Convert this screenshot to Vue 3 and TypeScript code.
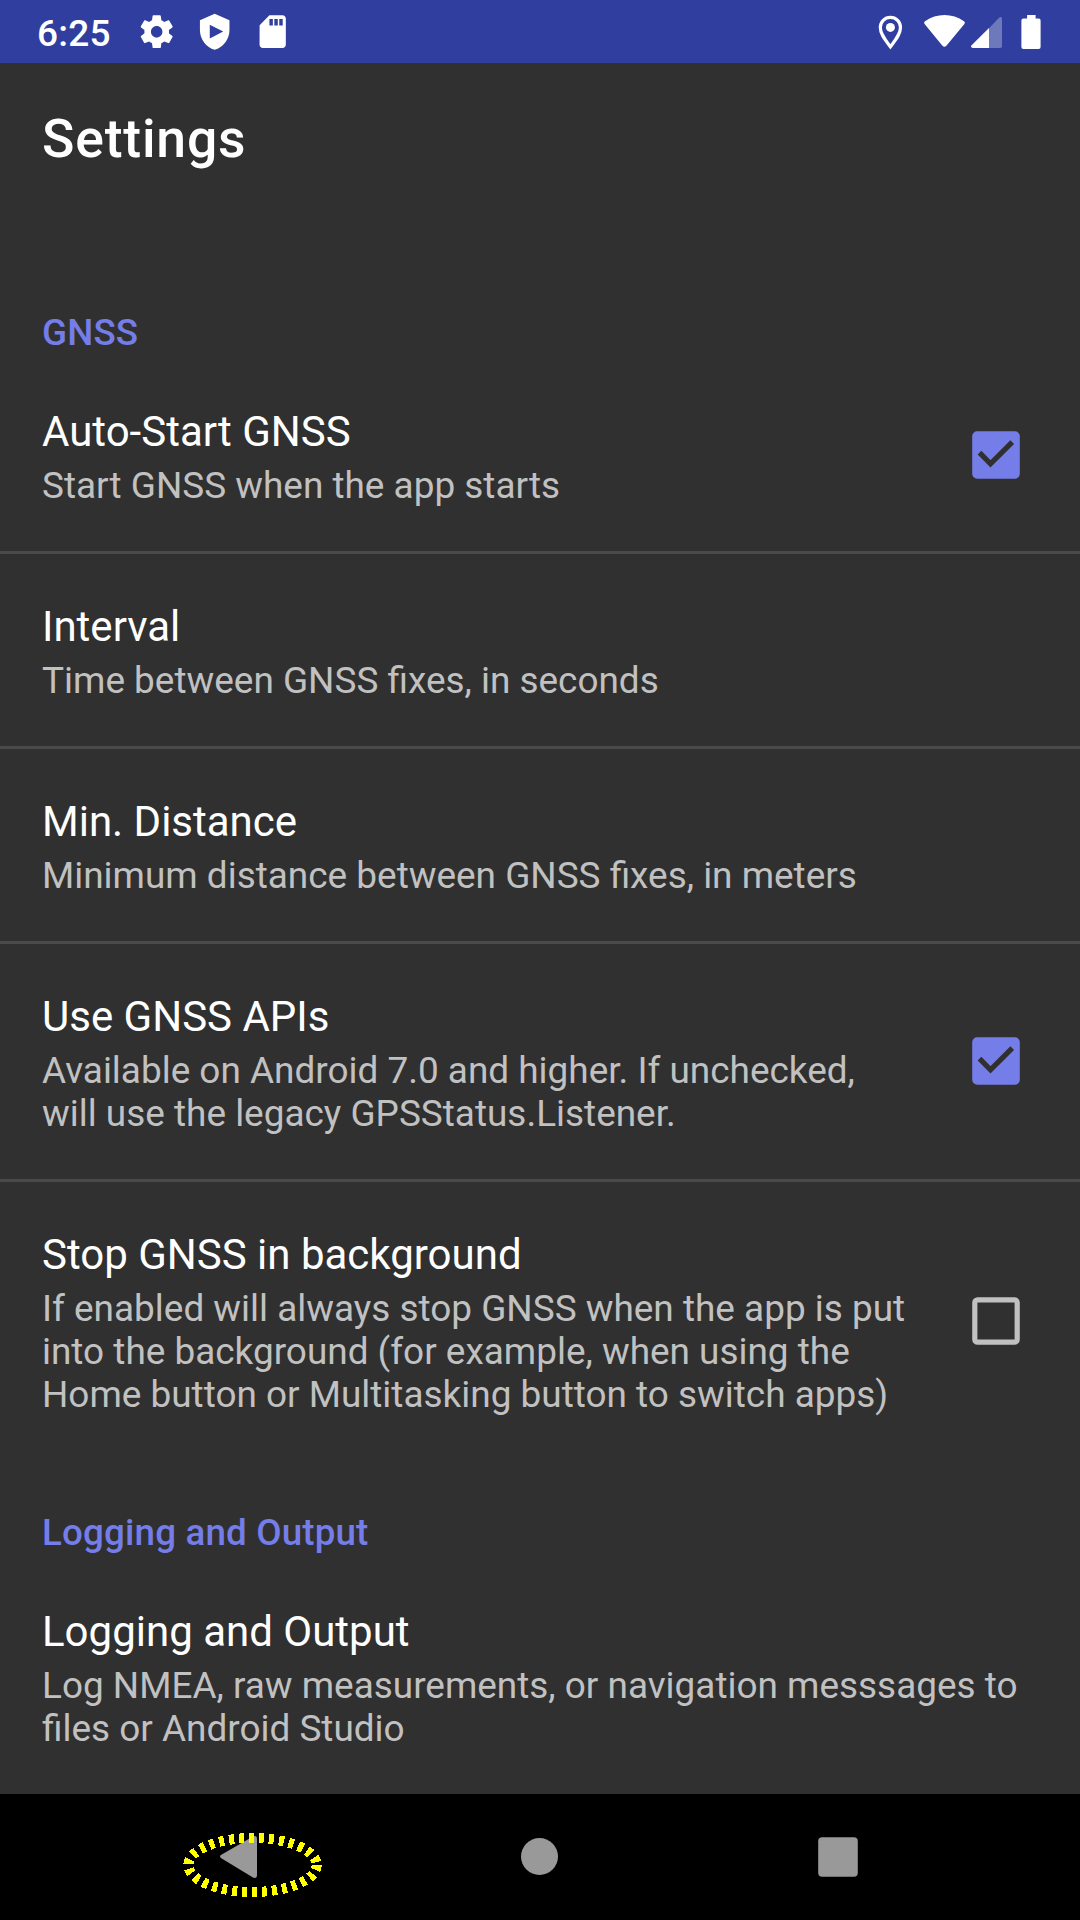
<script setup lang="ts">
interface Preference {
  title: string
  summary: string[]
  checked?: boolean
}
interface Category {
  name: string
  items: Preference[]
}

const categories: Category[] = [
  {
    name: 'GNSS',
    items: [
      { title: 'Auto-Start GNSS', summary: ['Start GNSS when the app starts'], checked: true },
      { title: 'Interval', summary: ['Time between GNSS fixes, in seconds'] },
      { title: 'Min. Distance', summary: ['Minimum distance between GNSS fixes, in meters'] },
      {
        title: 'Use GNSS APIs',
        summary: ['Available on Android 7.0 and higher. If unchecked,', 'will use the legacy GPSStatus.Listener.'],
        checked: true,
      },
      {
        title: 'Stop GNSS in background',
        summary: [
          'If enabled will always stop GNSS when the app is put',
          'into the background (for example, when using the',
          'Home button or Multitasking button to switch apps)',
        ],
        checked: false,
      },
    ],
  },
  {
    name: 'Logging and Output',
    items: [
      {
        title: 'Logging and Output',
        summary: ['Log NMEA, raw measurements, or navigation messsages to', 'files or Android Studio'],
      },
    ],
  },
]
</script>

<template>
  <div class="screen">
    <header class="status">
      <span class="time">6:25</span>
      <div class="notifications">
        <svg width="39.4" height="39.4" viewBox="0 0 24 24" fill="#fff">
          <path d="M19.43 12.98c.04-.32.07-.64.07-.98s-.03-.66-.07-.98l2.11-1.65c.19-.15.24-.42.12-.64l-2-3.46c-.12-.22-.39-.3-.61-.22l-2.49 1c-.52-.4-1.08-.73-1.69-.98l-.38-2.65C14.46 2.18 14.25 2 14 2h-4c-.25 0-.46.18-.49.42l-.38 2.65c-.61.25-1.17.59-1.69.98l-2.49-1c-.23-.09-.49 0-.61.22l-2 3.46c-.13.22-.07.49.12.64l2.11 1.65c-.04.32-.07.65-.07.98s.03.66.07.98l-2.11 1.65c-.19.15-.24.42-.12.64l2 3.46c.12.22.39.3.61.22l2.49-1c.52.4 1.08.73 1.69.98l.38 2.65c.03.24.24.42.49.42h4c.25 0 .46-.18.49-.42l.38-2.65c.61-.25 1.17-.59 1.69-.98l2.49 1c.23.09.49 0 .61-.22l2-3.46c.12-.22.07-.49-.12-.64l-2.11-1.65zM12 15.5c-1.93 0-3.5-1.57-3.5-3.5s1.57-3.5 3.5-3.5 3.5 1.57 3.5 3.5-1.57 3.5-3.5 3.5z" />
        </svg>
        <svg width="39.4" height="39.4" viewBox="0 0 24 24" fill="#fff" fill-rule="evenodd">
          <path d="M12 1 3 5v6c0 5.55 3.84 10.74 9 12 5.160-1.260 9-6.450 9-12V5zM9 7.700l8.200 4.200L9 16.100z" />
        </svg>
        <svg width="39.4" height="39.4" viewBox="0 0 24 24" fill="#fff" fill-rule="evenodd">
          <path d="M18 2h-8L4.020 8 4 20c0 1.100.9 2 2 2h12c1.100 0 2-.9 2-2V4c0-1.100-.9-2-2-2zM10 4.200h2.100v4H10zm3 0h2.100v4H13zm3 0h2.100v4H16z" />
        </svg>
      </div>
      <div class="system">
        <svg class="pin" width="26" height="36" viewBox="877 13 26 36">
          <path d="M890.400 16.400c-5.700 0-10.100 4.500-10.100 10.200 0 6.500 4.700 12 10.100 19.200 5.400-7.200 10.100-12.700 10.100-19.200 0-5.700-4.400-10.200-10.100-10.200z" fill="none" stroke="#fff" stroke-width="3.200" />
          <circle cx="890.400" cy="26.400" r="4.500" fill="#fff" />
        </svg>
        <svg class="wifi" width="43" height="36" viewBox="923 13 43 36">
          <path d="M925 20.300C936.500 12 952.500 12 964 20.300q1.500 1.300.4 2.800L946.400 44.800q-2 1.700-4 0L924.600 23.100q-1.100-1.500.4-2.800z" fill="#fff" />
        </svg>
        <svg class="signal" width="33" height="36" viewBox="970 13 33 36">
          <path d="M989 27.200 998.800 17q3.200-2.300 3.200 1.200v27q0 1.800-1.800 1.800H989z" fill="#fff" fill-opacity=".3" />
          <path d="M989 27V47h-16.200q-2.800-.5-1.200-2.700z" fill="#fff" />
        </svg>
        <svg class="battery" width="20" height="36" viewBox="1021.500 13 20 36">
          <path d="M1027.600 14h8.500v3.500h3q2 0 2 2V46q0 2-2 2h-15.200q-2 0-2-2V19.500q0-2 2-2h3.700z" fill="#fff" />
        </svg>
      </div>
    </header>

    <h1 class="page-title">Settings</h1>

    <section v-for="category in categories" :key="category.name" class="category">
      <h2>{{ category.name }}</h2>
      <div v-for="item in category.items" :key="item.title" class="row">
        <div class="text">
          <div class="title">{{ item.title }}</div>
          <div class="summary">
            <div v-for="line in item.summary" :key="line">{{ line }}</div>
          </div>
        </div>
        <svg v-if="item.checked !== undefined" class="check" width="48" height="48" viewBox="0 0 48 48">
          <template v-if="item.checked">
            <rect x=".2" y=".2" width="47.600" height="47.600" rx="5" fill="#757de8" />
            <path d="M7.500 21.700 18.500 32.800 40.200 11.200" fill="none" stroke="#303030" stroke-width="5.200" />
          </template>
          <rect v-else x="2.800" y="2.800" width="42.400" height="42.400" rx="2.800" fill="none" stroke="#c1c1c1" stroke-width="5.200" />
        </svg>
      </div>
    </section>

    <nav class="nav">
      <svg class="back" width="38" height="44" viewBox="0 0 38 44">
        <path d="M1.300 19.800 33 1.400q4-1.400 4 2.600v36q0 4-4 2.600L1.300 23.200q-2.600-1.700 0-3.400z" fill="#999" />
      </svg>
      <svg class="home" width="38" height="38" viewBox="0 0 38 38"><circle cx="18.500" cy="18.500" r="18.500" fill="#999" /></svg>
      <svg class="recent" width="40" height="40" viewBox="0 0 40 40"><rect x=".2" y=".2" width="39.600" height="39.600" rx="4" fill="#999" /></svg>
      <svg class="highlight" width="140" height="66" viewBox="0 0 140 66">
        <ellipse cx="69.500" cy="33" rx="64.200" ry="27" fill="none" stroke="#ff0" stroke-width="10" stroke-dasharray="5 5" shape-rendering="crispEdges" />
      </svg>
    </nav>
  </div>
</template>

<style>
body {
  margin: 0;
  background: #303030;
}
</style>

<style scoped>
.screen {
  width: 1080px;
  height: 1920px;
  overflow: hidden;
  display: flex;
  flex-direction: column;
  background: #303030;
  color: #fff;
  font-family: Roboto, sans-serif;
}
svg {
  display: block;
  flex: none;
}
.status {
  height: 63px;
  flex: none;
  box-sizing: border-box;
  padding: 0 39px 0 37px;
  background: #303f9f;
  display: flex;
  align-items: center;
}
.time {
  width: 100px;
  font-size: 37px;
  letter-spacing: 0.200px;
  font-weight: 500;
  line-height: 43px;
  padding-top: 3px;
}
.notifications {
  display: flex;
  gap: 18.600px;
}
.system {
  display: flex;
  margin-left: auto;
}
.wifi {
  margin-left: 20px;
}
.signal {
  margin-left: 4px;
}
.battery {
  margin-left: 18.500px;
}
.page-title {
  flex: none;
  margin: 0;
  height: 197px;
  box-sizing: border-box;
  padding: 44px 42px 0;
  font-size: 53.500px;
  line-height: 63px;
  font-weight: 500;
  letter-spacing: 0.800px;
}
.category {
  flex: none;
}
.category h2 {
  margin: 0;
  height: 99px;
  box-sizing: border-box;
  padding: 51px 42px 0;
  font-size: 36.750px;
  line-height: 43px;
  font-weight: 500;
  letter-spacing: 0.160px;
  color: #757de8;
}
.row {
  display: flex;
  align-items: center;
  justify-content: space-between;
  padding: 0 60px 0 42px;
}
.row + .row {
  border-top: 3px solid #4a4a4a;
}
.text {
  padding: 48px 0 44px;
  white-space: nowrap;
}
.title {
  font-size: 42px;
  line-height: 49px;
  margin-bottom: 8px;
}
.summary {
  font-size: 36.930px;
  line-height: 43px;
  color: #c1c1c1;
}
.check {
  margin-top: -0.200px;
}
.nav {
  position: relative;
  flex: none;
  height: 126px;
  background: #000;
  display: flex;
  align-items: center;
}
.back {
  margin-left: 219.500px;
}
.home {
  margin-left: 263.500px;
}
.recent {
  margin-left: 259px;
}
.highlight {
  position: absolute;
  left: 183px;
  top: 38px;
}
</style>
